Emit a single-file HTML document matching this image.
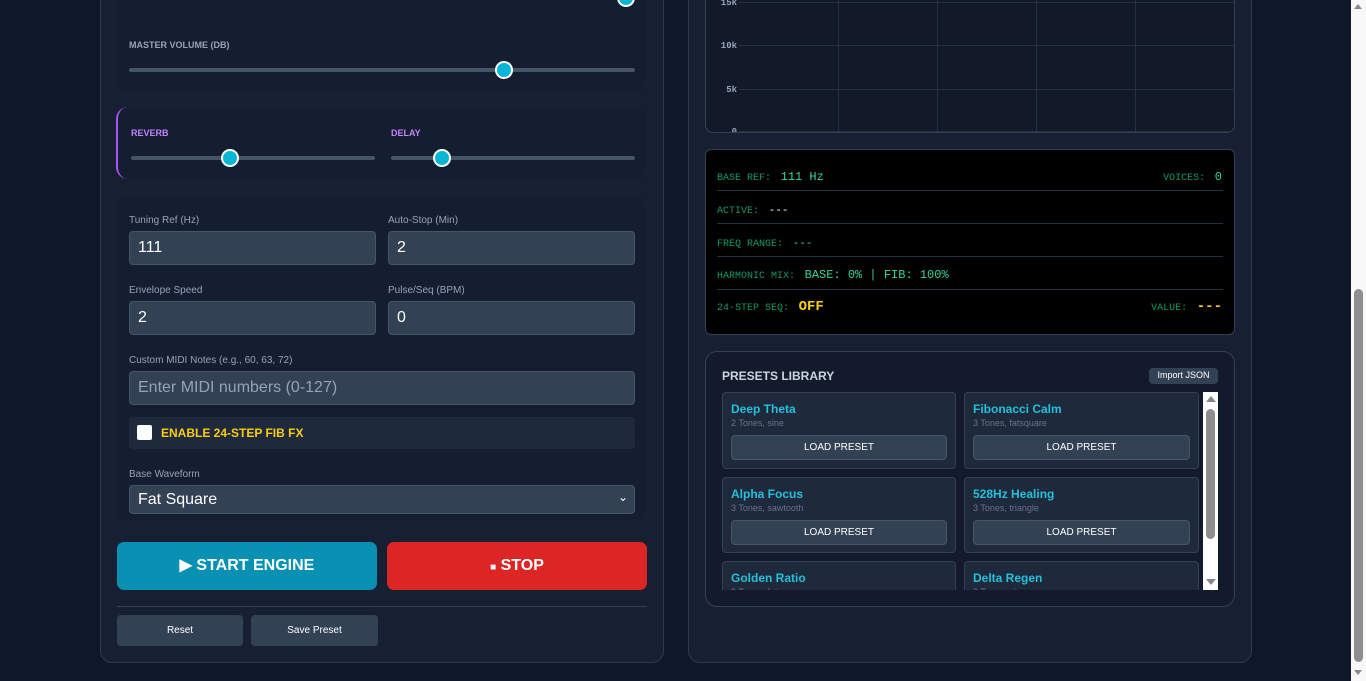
<!DOCTYPE html>
<html><head><meta charset="utf-8"><style>
*{box-sizing:border-box;margin:0;padding:0}
body{width:1366px;height:681px;overflow:hidden;background:#0f172a;font-family:"Liberation Sans",sans-serif;position:relative}
.a{position:absolute}
.panel{background:#172033;border:1px solid #2c3a50;border-radius:12px}
.card{background:#151e30;border-radius:10px}
.track{height:4px;background:#475569;border-radius:2px}
.thumb{width:18px;height:18px;border-radius:50%;background:#06b6d4;border:2px solid #fff}
.lbl{font-size:10px;color:#94a3b8}
.inp{background:#334155;border:1px solid #475569;border-radius:4px;color:#fff;font-size:16px;padding:7px 0 0 8px}
.mono{font-family:"Liberation Mono","DejaVu Sans Mono",monospace}
.sl{font-size:10px;color:#10996b}
.sv{font-size:12px;color:#34d399}
.sep{height:1px;background:#263244}
.pc{background:#1e293b;border:1px solid #334155;border-radius:4px}
.pt{font-size:12px;font-weight:bold;color:#22c0dc;position:absolute;left:8px;top:9px}
.ps{font-size:9px;color:#64748b;position:absolute;left:8px;top:25px}
.pb{position:absolute;left:8px;right:8px;top:42px;height:25px;background:#334155;border:1px solid #475569;border-radius:4px;color:#fff;font-size:10px;text-align:center;line-height:23px}
.btn{background:#334155;border-radius:4px;color:#fff;font-size:10px;text-align:center}
</style></head><body>
<div class="a panel" style="left:100px;top:-20px;width:564px;height:683px"></div>
<div class="a card" style="left:116px;top:-10px;width:530px;height:100px"></div>
<div class="a thumb" style="left:617px;top:-11px"></div>
<div class="a lbl" style="left:129px;top:40px;font-size:9px;font-weight:bold">MASTER VOLUME (DB)</div>
<div class="a track" style="left:129px;top:68px;width:506px"></div>
<div class="a thumb" style="left:495px;top:61px"></div>
<div class="a card" style="left:116px;top:107px;width:530px;height:72px;border-left:2px solid #a855f7;border-radius:12px 10px 10px 12px"></div>
<div class="a" style="left:131px;top:128px;font-size:9px;font-weight:bold;color:#c084fc">REVERB</div>
<div class="a" style="left:391px;top:128px;font-size:9px;font-weight:bold;color:#c084fc">DELAY</div>
<div class="a track" style="left:131px;top:156px;width:244px"></div>
<div class="a thumb" style="left:221px;top:149px"></div>
<div class="a track" style="left:391px;top:156px;width:244px"></div>
<div class="a thumb" style="left:433px;top:149px"></div>
<div class="a card" style="left:116px;top:198px;width:530px;height:322px"></div>
<div class="a lbl" style="left:129px;top:215px">Tuning Ref (Hz)</div>
<div class="a lbl" style="left:388px;top:215px">Auto-Stop (Min)</div>
<div class="a inp" style="left:129px;top:231px;width:247px;height:34px">111</div>
<div class="a inp" style="left:388px;top:231px;width:247px;height:34px">2</div>
<div class="a lbl" style="left:129px;top:285px">Envelope Speed</div>
<div class="a lbl" style="left:388px;top:285px">Pulse/Seq (BPM)</div>
<div class="a inp" style="left:129px;top:301px;width:247px;height:34px">2</div>
<div class="a inp" style="left:388px;top:301px;width:247px;height:34px">0</div>
<div class="a lbl" style="left:129px;top:355px">Custom MIDI Notes (e.g., 60, 63, 72)</div>
<div class="a inp" style="left:129px;top:371px;width:506px;height:34px;color:#94a3b8">Enter MIDI numbers (0-127)</div>
<div class="a" style="left:129px;top:417px;width:506px;height:32px;background:#1e293b;border-radius:4px"></div>
<div class="a" style="left:137px;top:425px;width:15px;height:15px;background:#fff;border-radius:2px"></div>
<div class="a" style="left:161px;top:426px;font-size:12px;font-weight:bold;color:#facc15">ENABLE 24-STEP FIB FX</div>
<div class="a lbl" style="left:129px;top:469px">Base Waveform</div>
<div class="a inp" style="left:129px;top:485px;width:506px;height:29px;font-size:16px;padding:5px 0 0 8px">Fat Square<span style="position:absolute;right:6px;top:4px;font-size:12px">&#8964;</span></div>
<div class="a" style="left:117px;top:542px;width:260px;height:48px;background:#0891b2;border-radius:7px;color:#fff;font-size:16px;font-weight:bold;text-align:center;line-height:47px">&#9654; START ENGINE</div>
<div class="a" style="left:387px;top:542px;width:260px;height:48px;background:#dc2626;border-radius:7px;color:#fff;font-size:16px;font-weight:bold;text-align:center;line-height:47px"><span style="font-size:10px">&#9632;</span> STOP</div>
<div class="a" style="left:117px;top:606px;width:530px;height:1px;background:#334155"></div>
<div class="a btn" style="left:117px;top:615px;width:126px;height:31px;line-height:31px">Reset</div>
<div class="a btn" style="left:251px;top:615px;width:127px;height:31px;line-height:31px">Save Preset</div>
<div class="a panel" style="left:688px;top:-20px;width:564px;height:683px"></div>
<div class="a" style="left:705px;top:-20px;width:530px;height:153px;background:#121a2a;border:1px solid #334155;border-radius:8px;overflow:hidden">
<svg width="530" height="153" style="position:absolute;left:0;top:0">
<g stroke="#263244" stroke-width="1">
<line x1="33" y1="21.5" x2="530" y2="21.5"/><line x1="33" y1="64.5" x2="530" y2="64.5"/><line x1="33" y1="108.5" x2="530" y2="108.5"/><line x1="33" y1="150.5" x2="530" y2="150.5"/>
<line x1="132.5" y1="0" x2="132.5" y2="153"/><line x1="231.5" y1="0" x2="231.5" y2="153"/><line x1="330.5" y1="0" x2="330.5" y2="153"/><line x1="429.5" y1="0" x2="429.5" y2="153"/>
</g>
<g font-family="Liberation Mono,monospace" font-size="9" font-weight="bold" fill="#94a3b8" text-anchor="end">
<text x="31" y="24">15k</text><text x="31" y="67">10k</text><text x="31" y="111">5k</text><text x="31" y="153">0</text></g>
</svg></div>
<div class="a mono" style="left:705px;top:149px;width:530px;height:186px;background:#000;border:1px solid #334155;border-radius:6px">
<div class="a" style="left:11px;top:17px"><span class="sl">BASE REF:</span> <span class="sv">111 Hz</span></div>
<div class="a" style="right:12px;top:17px"><span class="sl">VOICES:</span> <span class="sv">0</span></div>
<div class="a sep" style="left:11px;top:40px;width:506px"></div>
<div class="a" style="left:11px;top:50px"><span class="sl">ACTIVE:</span> <span style="font-size:11px;color:#fff">---</span></div>
<div class="a sep" style="left:11px;top:73px;width:506px"></div>
<div class="a" style="left:11px;top:83px"><span class="sl">FREQ RANGE:</span> <span class="sv" style="font-size:11px">---</span></div>
<div class="a sep" style="left:11px;top:106px;width:506px"></div>
<div class="a" style="left:11px;top:115px"><span class="sl">HARMONIC MIX:</span> <span class="sv">BASE: 0% | FIB: 100%</span></div>
<div class="a sep" style="left:11px;top:139px;width:506px"></div>
<div class="a" style="left:11px;top:147px"><span class="sl">24-STEP SEQ:</span> <span style="font-size:14px;font-weight:bold;color:#facc15">OFF</span></div>
<div class="a" style="right:12px;top:147px"><span class="sl">VALUE:</span> <span style="font-size:14px;font-weight:bold;color:#facc15">---</span></div>
</div>
<div class="a" style="left:705px;top:351px;width:530px;height:256px;background:#121a2b;border:1px solid #334155;border-radius:12px;overflow:hidden">
<div class="a" style="left:16px;top:17px;font-size:12px;font-weight:bold;color:#cbd5e1">PRESETS LIBRARY</div>
<div class="a btn" style="left:443px;top:16px;width:69px;height:16px;font-size:9px;line-height:15px">Import JSON</div>
<div class="a" style="left:16px;top:40px;width:496px;height:198px;overflow:hidden">
<div class="a pc" style="left:0;top:0;width:234px;height:77px"><div class="pt">Deep Theta</div><div class="ps">2 Tones, sine</div><div class="pb">LOAD PRESET</div></div>
<div class="a pc" style="left:242px;top:0;width:235px;height:77px"><div class="pt">Fibonacci Calm</div><div class="ps">3 Tones, fatsquare</div><div class="pb">LOAD PRESET</div></div>
<div class="a pc" style="left:0;top:85px;width:234px;height:76px"><div class="pt">Alpha Focus</div><div class="ps">3 Tones, sawtooth</div><div class="pb">LOAD PRESET</div></div>
<div class="a pc" style="left:242px;top:85px;width:235px;height:76px"><div class="pt">528Hz Healing</div><div class="ps">3 Tones, triangle</div><div class="pb">LOAD PRESET</div></div>
<div class="a pc" style="left:0;top:169px;width:234px;height:76px"><div class="pt">Golden Ratio</div><div class="ps">3 Tones, fatsq</div></div>
<div class="a pc" style="left:242px;top:169px;width:235px;height:76px"><div class="pt">Delta Regen</div><div class="ps">2 Tones, sine</div></div>
<div class="a" style="left:481px;top:0;width:15px;height:198px;background:#fff">
<div class="a" style="left:3px;top:4px;width:0;height:0;border-left:5px solid transparent;border-right:5px solid transparent;border-bottom:6px solid #888"></div>
<div class="a" style="left:3px;top:17px;width:9px;height:130px;background:#8e8e8e;border-radius:5px"></div>
<div class="a" style="left:3px;top:187px;width:0;height:0;border-left:5px solid transparent;border-right:5px solid transparent;border-top:6px solid #888"></div>
</div></div></div>
<div class="a" style="left:1351px;top:0;width:15px;height:681px;background:#f8f8f8">
<div class="a" style="left:3px;top:4px;border-left:4px solid transparent;border-right:4px solid transparent;border-bottom:5px solid #888"></div>
<div class="a" style="left:3px;top:289px;width:9px;height:373px;background:#8e8e8e;border-radius:5px"></div>
<div class="a" style="left:3px;top:670px;border-left:4px solid transparent;border-right:4px solid transparent;border-top:5px solid #888"></div>
</div>
</body></html>
